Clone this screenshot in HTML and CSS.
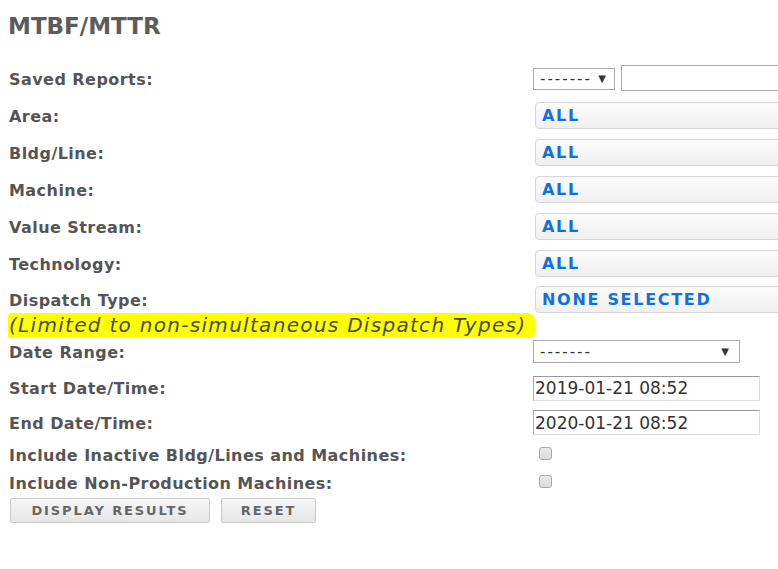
FILE: index.html
```html
<!DOCTYPE html>
<html lang="en">
<head>
    <meta charset="UTF-8">
    <meta name="viewport" content="width=device-width, initial-scale=1.0">
    <link rel="stylesheet" href="styles.css">
    <title>MTBF/MTTR</title>
</head>
<body>

    <h1 class="title">MTBF/MTTR</h1>

    <form id="reportForm" class="report-form">
        <div class="row">
            <label class="label">Saved Reports:</label>
            <div class="field">
                <div class="select select-small">-------<span class="arrow">&#9660;</span></div>
                <input type="text" class="text-input saved-name">
            </div>
        </div>
        <div class="row">
            <label class="label">Area:</label>
            <div class="field"><button type="button" class="multi">ALL</button></div>
        </div>
        <div class="row">
            <label class="label">Bldg/Line:</label>
            <div class="field"><button type="button" class="multi">ALL</button></div>
        </div>
        <div class="row">
            <label class="label">Machine:</label>
            <div class="field"><button type="button" class="multi">ALL</button></div>
        </div>
        <div class="row">
            <label class="label">Value Stream:</label>
            <div class="field"><button type="button" class="multi">ALL</button></div>
        </div>
        <div class="row">
            <label class="label">Technology:</label>
            <div class="field"><button type="button" class="multi">ALL</button></div>
        </div>
        <div class="row row-dispatch">
            <label class="label">Dispatch Type:</label>
            <div class="field"><button type="button" class="multi">NONE SELECTED</button></div>
        </div>
        <div class="note"><span class="mark">(Limited to non-simultaneous Dispatch Types)</span></div>

        <div class="row row-date">
            <label class="label">Date Range:</label>
            <div class="field">
                <div class="select select-wide">-------<span class="arrow">&#9660;</span></div>
            </div>
        </div>
        <div class="row row-start">
            <label class="label">Start Date/Time:</label>
            <div class="field"><input type="text" class="date-input" value="2019-01-21 08:52"></div>
        </div>
        <div class="row row-end">
            <label class="label">End Date/Time:</label>
            <div class="field"><input type="text" class="date-input" value="2020-01-21 08:52"></div>
        </div>
        <div class="row row-check">
            <label class="label">Include Inactive Bldg/Lines and Machines:</label>
            <div class="field"><span class="check"></span></div>
        </div>
        <div class="row row-check row-check2">
            <label class="label">Include Non-Production Machines:</label>
            <div class="field"><span class="check"></span></div>
        </div>

        <div class="actions">
            <button type="submit" class="btn btn-display">DISPLAY RESULTS</button>
            <button type="reset" class="btn btn-reset">RESET</button>
        </div>
    </form>

</body>
</html>
```

FILE: styles.css
```css
html, body {
    overflow: hidden;
}

body {
    font-family: 'DejaVu Sans', Verdana, sans-serif;
    color: #555;
    margin: 0;
    padding: 0 0 0 9px;
    background: #fff;
}

.title {
    font-size: 23px;
    font-weight: bold;
    color: #5c5c5c;
    margin: 0 0 0 -1px;
    height: 60px;
    line-height: 52px;
}

.row {
    display: flex;
    align-items: center;
    height: 37px;
}

.label {
    width: 524px;
    flex: none;
    font-size: 16px;
    font-weight: bold;
    letter-spacing: 0.45px;
    white-space: nowrap;
    padding-top: 1px;
}

.field {
    display: flex;
    align-items: center;
    gap: 6px;
    white-space: nowrap;
}

.select {
    box-sizing: border-box;
    display: flex;
    align-items: center;
    justify-content: space-between;
    border: 1px solid #a9a9a9;
    background: #fff;
    color: #333;
    font-size: 15px;
    letter-spacing: 2px;
    padding: 0 8px 0 6px;
    height: 22px;
}

.select-small {
    width: 82px;
}

.select-wide {
    width: 207px;
    height: 23px;
    padding-right: 10px;
}

.arrow {
    font-size: 10px;
    letter-spacing: 0;
    color: #333;
}

.text-input {
    box-sizing: border-box;
    width: 170px;
    height: 26px;
    border: 1px solid #aaa;
    margin: -1px 0 0 0;
}

.multi {
    box-sizing: border-box;
    margin-left: 2px;
    width: 260px;
    height: 27px;
    text-align: left;
    padding: 0 6px;
    border: 1px solid #d6d6d6;
    border-radius: 4px;
    background: linear-gradient(#fbfbfb, #f0f0f0);
    font-family: 'DejaVu Sans', Verdana, sans-serif;
    font-size: 16px;
    font-weight: bold;
    letter-spacing: 1.7px;
    color: #1170e0;
}

.row-dispatch {
    box-sizing: border-box;
    height: 31px;
    padding-top: 4px;
}

.note {
    height: 25px;
    margin-left: -1px;
}

.mark {
    display: inline-block;
    width: 527px;
    height: 25px;
    line-height: 24px;
    background: #ffff00;
    border-radius: 3px 8px 6px 2px;
    font-style: italic;
    font-size: 20px;
    letter-spacing: 1.3px;
    color: #4a4a33;
    padding-left: 1px;
    box-sizing: border-box;
    white-space: nowrap;
}

.row-date {
    height: 23px;
    margin-top: 2px;
}

.row-start {
    height: 24px;
    margin-top: 13px;
}

.row-end {
    height: 25px;
    margin-top: 10px;
}

.date-input {
    box-sizing: border-box;
    width: 227px;
    height: 25px;
    padding: 0 1px;
    border: 1px solid #ddd;
    border-top-color: #999;
    border-left-color: #aaa;
    font-family: 'DejaVu Sans', Verdana, sans-serif;
    font-size: 17px;
    color: #333;
}

.row-check {
    height: 20px;
    margin-top: 10px;
    align-items: flex-start;
}

.row-check .label {
    line-height: 20px;
}

.row-check2 {
    margin-top: 8px;
}

.check {
    display: block;
    box-sizing: border-box;
    width: 13px;
    height: 13px;
    margin: 2px 0 0 6px;
    border: 1px solid #aaa;
    border-radius: 3px;
    background: linear-gradient(#e9e9e9, #dcdcdc);
}

.actions {
    display: flex;
    gap: 11px;
    margin-top: 5px;
    margin-left: 1px;
}

.btn {
    box-sizing: border-box;
    height: 25px;
    border: 1px solid #c8c8c8;
    border-radius: 2px;
    background: linear-gradient(#f7f7f7, #e6e6e6);
    font-family: 'DejaVu Sans', Verdana, sans-serif;
    font-size: 13px;
    font-weight: bold;
    letter-spacing: 1.9px;
    color: #666;
    padding: 0;
}

.btn-display {
    width: 200px;
}

.btn-reset {
    width: 95px;
}
```
